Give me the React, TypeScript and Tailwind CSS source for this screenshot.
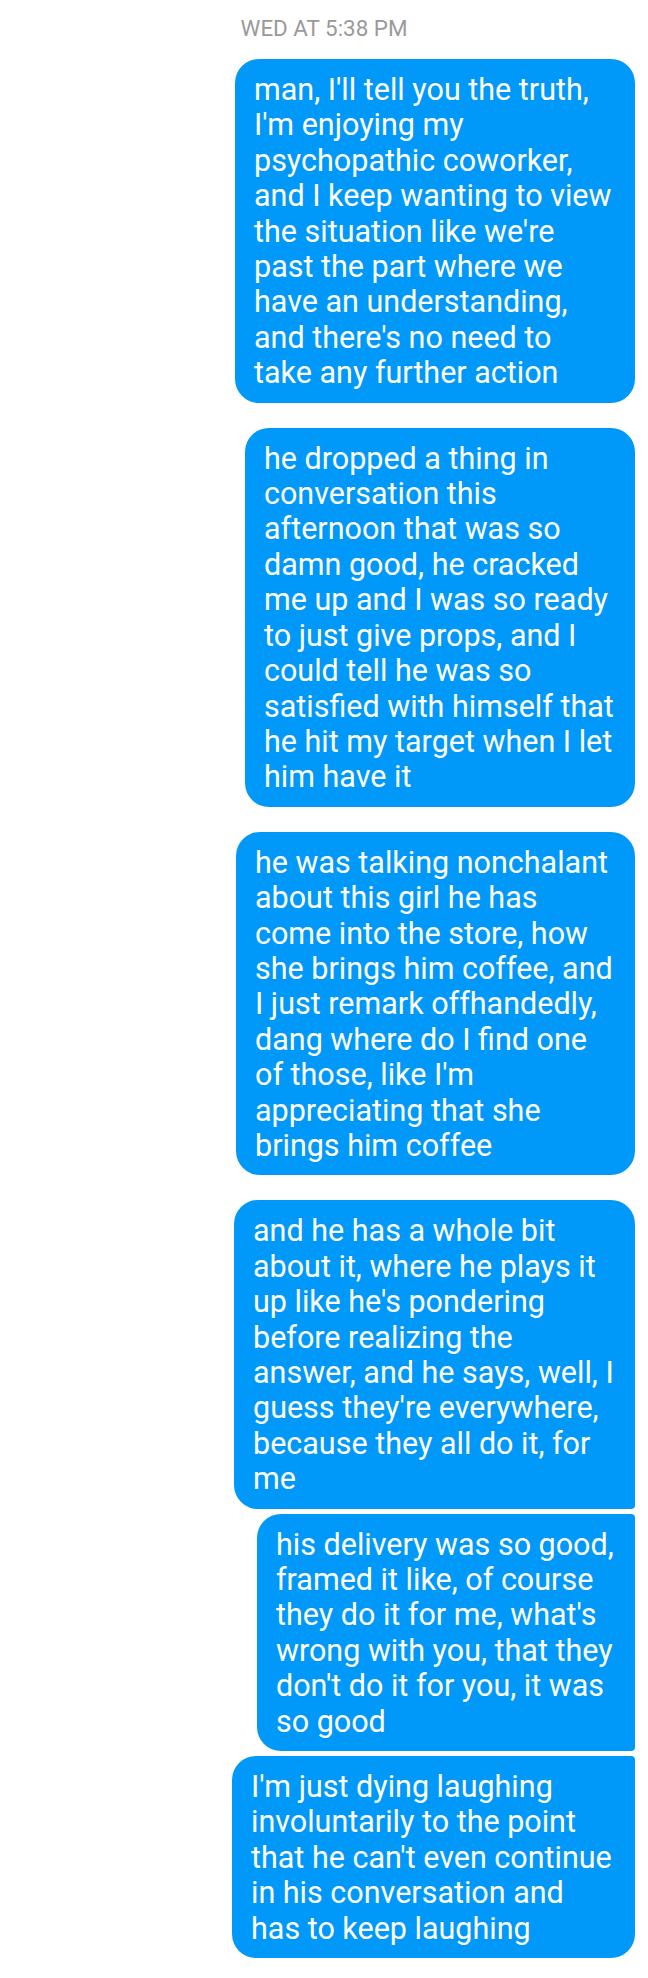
import React from "react";

type Msg = { lines: string[]; w: string; r: string; mt: string };

const msgs: Msg[] = [
  {
    lines: [
      "man, I'll tell you the truth,",
      "I'm enjoying my",
      "psychopathic coworker,",
      "and I keep wanting to view",
      "the situation like we're",
      "past the part where we",
      "have an understanding,",
      "and there's no need to",
      "take any further action",
    ],
    w: "w-[400px]",
    r: "rounded-[24px]",
    mt: "mt-[18px]",
  },
  {
    lines: [
      "he dropped a thing in",
      "conversation this",
      "afternoon that was so",
      "damn good, he cracked",
      "me up and I was so ready",
      "to just give props, and I",
      "could tell he was so",
      "satisfied with himself that",
      "he hit my target when I let",
      "him have it",
    ],
    w: "w-[390px]",
    r: "rounded-[24px]",
    mt: "mt-[25px]",
  },
  {
    lines: [
      "he was talking nonchalant",
      "about this girl he has",
      "come into the store, how",
      "she brings him coffee, and",
      "I just remark offhandedly,",
      "dang where do I find one",
      "of those, like I'm",
      "appreciating that she",
      "brings him coffee",
    ],
    w: "w-[399px]",
    r: "rounded-[24px]",
    mt: "mt-[25px]",
  },
  {
    lines: [
      "and he has a whole bit",
      "about it, where he plays it",
      "up like he's pondering",
      "before realizing the",
      "answer, and he says, well, I",
      "guess they're everywhere,",
      "because they all do it, for",
      "me",
    ],
    w: "w-[401px]",
    r: "rounded-tl-[24px] rounded-tr-[24px] rounded-br-[4px] rounded-bl-[24px]",
    mt: "mt-[25px]",
  },
  {
    lines: [
      "his delivery was so good,",
      "framed it like, of course",
      "they do it for me, what's",
      "wrong with you, that they",
      "don't do it for you, it was",
      "so good",
    ],
    w: "w-[378px]",
    r: "rounded-tl-[24px] rounded-tr-[4px] rounded-br-[4px] rounded-bl-[24px]",
    mt: "mt-[5px]",
  },
  {
    lines: [
      "I'm just dying laughing",
      "involuntarily to the point",
      "that he can't even continue",
      "in his conversation and",
      "has to keep laughing",
    ],
    w: "w-[403px]",
    r: "rounded-tl-[24px] rounded-tr-[4px] rounded-br-[24px] rounded-bl-[24px]",
    mt: "mt-[5px]",
  },
];

export default function App() {
  return (
    <div className="w-[648px] h-[1978px] bg-white flex flex-col items-end pr-[13px] overflow-hidden font-['Roboto',sans-serif]">
      <div className="self-stretch pl-[13px] pt-[16px] text-center text-[22.4px] leading-[25px] text-[#9a9a9a]">
        WED AT 5:38 PM
      </div>
      {msgs.map((m, i) => (
        <div
          key={i}
          className={`${m.w} ${m.r} ${m.mt} bg-[#0099fa] text-white text-[30.5px] leading-[35.4px] pl-[19px] pt-[13px] pb-[12px] whitespace-nowrap`}
        >
          {m.lines.map((l, j) => (
            <div key={j}>{l}</div>
          ))}
        </div>
      ))}
    </div>
  );
}
